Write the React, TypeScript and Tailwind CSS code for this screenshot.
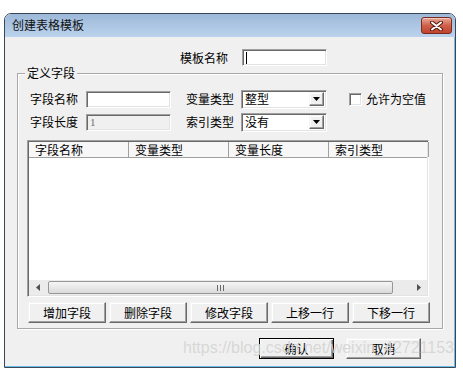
import React from "react";

// Win7-basic style "创建表格模板" dialog
const font = "font-['Noto_Sans_CJK_SC',sans-serif]";
const sunken =
  "border border-t-[#a0a0a0] border-l-[#a0a0a0] border-r-white border-b-white shadow-[inset_1px_1px_0_#696969,inset_-1px_-1px_0_#e3e3e3]";
const raised =
  "border border-t-[#f4f4f4] border-l-[#f4f4f4] border-r-[#696969] border-b-[#696969] shadow-[inset_-1px_-1px_0_#a0a0a0,inset_1px_1px_0_#ffffff]";

function Label({ text, className = "" }: { text: string; className?: string }) {
  return <span className={`text-[12px] leading-[14px] text-black whitespace-nowrap ${className}`}>{text}</span>;
}

function ComboBox({ value }: { value: string }) {
  return (
    <div className={`w-[86px] h-[19px] bg-white flex items-center pl-[3px] pr-[2px] ${sunken}`}>
      <span className="flex-1 text-[12px] leading-[14px] text-black">{value}</span>
      <div className={`w-[15px] h-[14px] bg-[#f0f0f0] flex items-center justify-center ${raised}`}>
        <svg width="7" height="4" viewBox="0 0 7 4">
          <path d="M0 0h7L3.5 4z" fill="#000" />
        </svg>
      </div>
    </div>
  );
}

function PushButton({ text, isDefault = false, className = "" }: { text: string; isDefault?: boolean; className?: string }) {
  return (
    <button
      className={`h-[21px] bg-[#f0f0f0] flex items-center justify-center text-[12px] leading-[14px] text-black ${
        isDefault
          ? "border border-black shadow-[inset_1px_1px_0_#ffffff,inset_-1px_-1px_0_#696969,inset_-2px_-2px_0_#a0a0a0]"
          : raised
      } ${className}`}
    >
      {text}
    </button>
  );
}

export default function App() {
  const columns = ["字段名称", "变量类型", "变量长度", "索引类型"];
  const actions = ["增加字段", "删除字段", "修改字段", "上移一行", "下移一行"];

  return (
    <div className={`relative w-[463px] h-[368px] bg-white overflow-hidden pt-[13px] pl-[4px] ${font}`}>
      <div className="w-[452px] h-[355px] border border-[#3a4757] rounded-t-[7px] overflow-hidden flex flex-col">
        {/* Title bar */}
        <div className="h-[23px] flex-shrink-0 bg-linear-to-b from-[#9db8d9] to-[#bbd3ec] flex items-start pl-[7px] pr-[3px]">
          <span className="flex-1 pt-[4px] text-[12px] leading-[14px] text-[#111]">创建表格模板</span>
          <div className="mt-[3px] w-[31px] h-[17px] rounded-[3px] border border-[#7a2b1f] bg-linear-to-b from-[#e6a898] via-[#d0604a] to-[#c0432d] flex items-center justify-center shadow-[inset_0_1px_0_#f4c8bc]">
            <svg width="13" height="10" viewBox="0 0 13 10">
              <path d="M2 1.5l9 7M11 1.5l-9 7" stroke="#5a1a10" strokeWidth="4" strokeLinecap="round" />
              <path d="M2 1.5l9 7M11 1.5l-9 7" stroke="#fff" strokeWidth="2" strokeLinecap="round" />
            </svg>
          </div>
        </div>

        {/* Client area */}
        <div className="flex-1 bg-[#f0f0f0] border-r border-b border-[#6cbbe8] flex flex-col">
          {/* Template name */}
          <div className="mt-[12px] pl-[175px] h-[17px] flex items-center">
            <Label text="模板名称" className="w-[62px]" />
            <div className={`w-[85px] h-[17px] bg-white flex items-center pl-[3px] ${sunken}`}>
              <span className="w-px h-[12px] bg-black" />
            </div>
          </div>

          {/* Group box */}
          <div className="relative mt-[7px] ml-[12px] w-[426px] h-[256px] border border-[#a8a8a8] shadow-[inset_1px_1px_0_#ffffff,1px_1px_0_#ffffff] flex flex-col">
            <span className="absolute -top-[8px] left-[7px] px-[2px] bg-[#f0f0f0] text-[12px] leading-[14px] text-black">
              定义字段
            </span>

            {/* Row A */}
            <div className="mt-[16px] h-[18px] flex items-center">
              <Label text="字段名称" className="ml-[12px] w-[56px]" />
              <div className={`w-[85px] h-[17px] bg-white ${sunken}`} />
              <Label text="变量类型" className="ml-[15px] w-[55px]" />
              <ComboBox value="整型" />
              <div className={`ml-[22px] w-[13px] h-[13px] bg-white ${sunken}`} />
              <Label text="允许为空值" className="ml-[4px]" />
            </div>

            {/* Row B */}
            <div className="mt-[5px] h-[18px] flex items-center">
              <Label text="字段长度" className="ml-[12px] w-[56px]" />
              <div className={`w-[85px] h-[17px] bg-[#f0f0f0] flex items-center pl-[3px] ${sunken}`}>
                <span className="text-[11px] leading-[12px] text-[#6d6d6d] font-['Liberation_Serif',serif]">1</span>
              </div>
              <Label text="索引类型" className="ml-[15px] w-[55px]" />
              <ComboBox value="没有" />
            </div>

            {/* List view */}
            <div className={`mt-[9px] ml-[9px] w-[402px] h-[157px] bg-white flex flex-col ${sunken} p-px`}>
              <div className="h-[16px] flex-shrink-0 flex bg-[#f7f7f7] border-b border-[#a0a0a0]">
                {columns.map((c) => (
                  <div key={c} className="w-[100px] flex-shrink-0 border-r border-[#a0a0a0] pl-[6px] text-[12px] leading-[15px] text-black">
                    {c}
                  </div>
                ))}
              </div>
              <div className="flex-1" />
              {/* Horizontal scrollbar */}
              <div className="h-[15px] flex-shrink-0 flex items-center bg-[#ebebeb]">
                <div className="w-[17px] h-full flex items-center justify-center">
                  <svg width="4" height="7" viewBox="0 0 4 7">
                    <path d="M4 0v7L0 3.5z" fill="#505050" />
                  </svg>
                </div>
                <div className="ml-[2px] w-[345px] h-[13px] rounded-[2px] border border-[#979797] bg-linear-to-b from-[#f6f6f6] to-[#dadada] flex items-center justify-center gap-[2px]">
                  <span className="w-px h-[6px] bg-[#6a6a6a]" />
                  <span className="w-px h-[6px] bg-[#6a6a6a]" />
                  <span className="w-px h-[6px] bg-[#6a6a6a]" />
                </div>
                <div className="flex-1" />
                <div className="w-[17px] h-full flex items-center justify-center">
                  <svg width="4" height="7" viewBox="0 0 4 7">
                    <path d="M0 0v7L4 3.5z" fill="#505050" />
                  </svg>
                </div>
              </div>
            </div>

            {/* Action buttons */}
            <div className="mt-[5px] ml-[10px] flex gap-[3px]">
              {actions.map((a) => (
                <PushButton key={a} text={a} className="w-[78px]" />
              ))}
            </div>
          </div>

          {/* Dialog buttons */}
          <div className="mt-[9px] ml-[254px] flex gap-[12px]">
            <PushButton text="确认" isDefault className="w-[75px]" />
            <PushButton text="取消" className="w-[75px]" />
          </div>
        </div>
      </div>

      {/* Watermark overlay */}
      <span className="absolute left-[183px] top-[340px] pointer-events-none font-['Liberation_Sans',sans-serif] text-[16px] leading-[16px] text-[#d4d4d4]/90 whitespace-nowrap">
        https://blog.csdn.net/weixin_42721153
      </span>
    </div>
  );
}
